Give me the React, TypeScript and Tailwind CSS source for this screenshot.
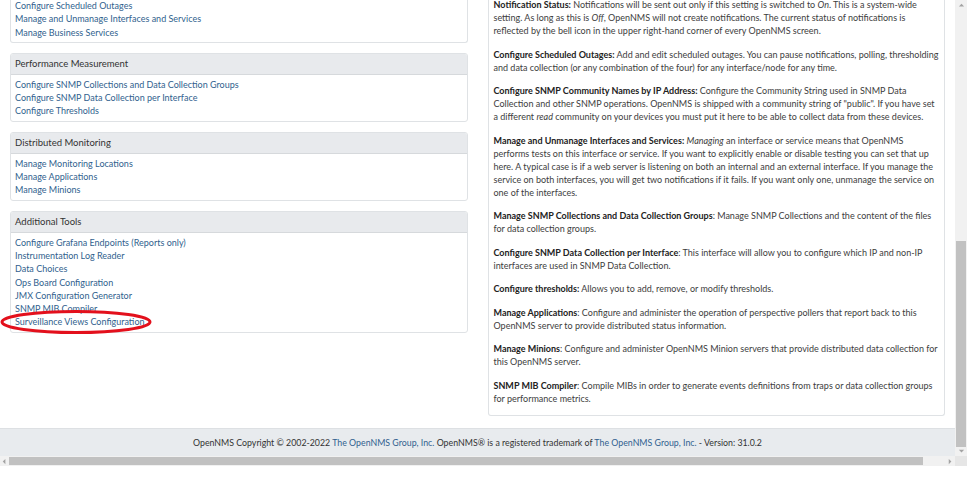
import React from 'react';

const font = { fontFamily: 'Lato, "Open Sans", sans-serif' };

const sections = [
  {
    title: '',
    links: ['Configure Scheduled Outages', 'Manage and Unmanage Interfaces and Services', 'Manage Business Services'],
  },
  {
    title: 'Performance Measurement',
    links: [
      'Configure SNMP Collections and Data Collection Groups',
      'Configure SNMP Data Collection per Interface',
      'Configure Thresholds',
    ],
  },
  {
    title: 'Distributed Monitoring',
    links: ['Manage Monitoring Locations', 'Manage Applications', 'Manage Minions'],
  },
  {
    title: 'Additional Tools',
    links: [
      'Configure Grafana Endpoints (Reports only)',
      'Instrumentation Log Reader',
      'Data Choices',
      'Ops Board Configuration',
      'JMX Configuration Generator',
      'SNMP MIB Compiler',
      'Surveillance Views Configuration',
    ],
  },
];

function Card({ title, links }: { title: string; links: string[] }) {
  return (
    <div className={`overflow-hidden rounded-[3px] border border-[#dfe2e5] bg-white ${title ? '' : 'mt-[-6px] border-t-0'}`}>
      {title && (
        <div className="h-[21px] border-b border-[#d6d9dc] bg-[#e8eaed] px-[4px] text-[9.5px] leading-[20px] text-[#333]">
          {title}
        </div>
      )}
      <ul className={`px-[4px] text-[9px] leading-[13.3px] text-[#315f8e] ${title ? 'pt-[3px] pb-[3px]' : 'pt-[5px] pb-[3px]'}`}>
        {links.map((l) => (
          <li key={l}>{l}</li>
        ))}
      </ul>
    </div>
  );
}

function Para({ label, children }: { label: string; children: React.ReactNode }) {
  return (
    <p className="mb-[10.5px] last:mb-0">
      <b className="font-bold text-[#222]">{label}</b>
      {children}
    </p>
  );
}

function Help() {
  return (
    <div className="mt-[-4px] rounded-[3px] border border-t-0 border-[#dfe2e5] bg-white px-[5px] pt-[2px] pb-[10px] text-[9px] leading-[13px] text-[#3d3d3d]">
      <Para label="Notification Status:">
        {' '}Notifications will be sent out only if this setting is switched to <i>On</i>. This is a system-wide setting. As
        long as this is <i>Off</i>, OpenNMS will not create notifications. The current status of notifications is
        reflected by the bell icon in the upper right-hand corner of every OpenNMS screen.
      </Para>
      <Para label="Configure Scheduled Outages:">
        {' '}Add and edit scheduled outages. You can pause notifications, polling, thresholding and data collection (or
        any combination of the four) for any interface/node for any time.
      </Para>
      <Para label="Configure SNMP Community Names by IP Address:">
        {' '}Configure the Community String used in SNMP Data Collection and other SNMP operations. OpenNMS is shipped
        with a community string of "public". If you have set a different <i>read</i> community on your devices you must
        put it here to be able to collect data from these devices.
      </Para>
      <Para label="Manage and Unmanage Interfaces and Services:">
        {' '}<i>Managing</i> an interface or service means that OpenNMS performs tests on this interface or service. If
        you want to explicitly enable or disable testing you can set that up here. A typical case is if a web server is
        listening on both an internal and an external interface. If you manage the service on both interfaces, you will
        get two notifications if it fails. If you want only one, unmanage the service on one of the interfaces.
      </Para>
      <Para label="Manage SNMP Collections and Data Collection Groups">
        : Manage SNMP Collections and the content of the files for data collection groups.
      </Para>
      <Para label="Configure SNMP Data Collection per Interface">
        : This interface will allow you to configure which IP and non-IP interfaces are used in SNMP Data Collection.
      </Para>
      <Para label="Configure thresholds:">{' '}Allows you to add, remove, or modify thresholds.</Para>
      <Para label="Manage Applications">
        : Configure and administer the operation of perspective pollers that report back to this OpenNMS server to
        provide distributed status information.
      </Para>
      <Para label="Manage Minions">
        : Configure and administer OpenNMS Minion servers that provide distributed data collection for this OpenNMS
        server.
      </Para>
      <Para label="SNMP MIB Compiler">
        : Compile MIBs in order to generate events definitions from traps or data collection groups for performance
        metrics.
      </Para>
    </div>
  );
}

function Arrow({ dir }: { dir: 'up' | 'down' | 'left' | 'right' }) {
  const pts = {
    up: '1,5 4,2 7,5',
    down: '1,2 4,5 7,2',
    left: '5,1 2,4 5,7',
    right: '2,1 5,4 2,7',
  }[dir];
  return (
    <svg width="7" height="7" viewBox="0 0 8 8">
      <polygon points={pts} fill="#a3a3a3" />
    </svg>
  );
}

export default function App() {
  return (
    <div className="relative h-[490px] w-[967px] overflow-hidden bg-white" style={font}>
      <div className="flex h-[466px]">
        <div className="flex w-[955px] flex-col">
          <div className="flex h-[428px] gap-[20px] overflow-hidden px-[10px]">
            <div className="flex w-[458px] flex-col gap-[10px]">
              {sections.map((s) => (
                <Card key={s.links[0]} title={s.title} links={s.links} />
              ))}
            </div>
            <div className="w-[458px]">
              <Help />
            </div>
          </div>
          <footer className="flex h-[28px] items-center justify-center border-t border-[#dde0e3] bg-[#e8ebee] text-[8.8px] text-[#333]">
            <span className="whitespace-nowrap">
              OpenNMS Copyright © 2002-2022 <span className="text-[#315f8e]">The OpenNMS Group, Inc.</span> OpenNMS® is a
              registered trademark of <span className="text-[#315f8e]">The OpenNMS Group, Inc.</span> - Version: 31.0.2
            </span>
          </footer>
          <div className="flex h-[10px] items-center bg-[#f1f1f1]">
            <div className="flex w-[9px] justify-center">
              <Arrow dir="left" />
            </div>
            <div className="h-[8px] w-[914px] bg-[#c1c1c1]" />
            <div className="flex-1" />
            <div className="flex w-[9px] justify-center">
              <Arrow dir="right" />
            </div>
          </div>
        </div>
        <div className="flex w-[12px] flex-col bg-[#f1f1f1]">
          <div className="flex h-[12px] items-center justify-center">
            <Arrow dir="up" />
          </div>
          <div className="flex flex-1 flex-col px-[1px]">
            <div className="h-[229px]" />
            <div className="h-[206px] bg-[#c1c1c1]" />
          </div>
          <div className="flex h-[10px] items-center justify-center">
            <Arrow dir="down" />
          </div>
          <div className="h-[10px] bg-[#e6e6e6]" />
        </div>
      </div>
      <svg className="pointer-events-none absolute left-0 top-0" width="967" height="490">
        <ellipse cx="76" cy="322" rx="74" ry="10.5" fill="none" stroke="#e3101c" strokeWidth="3" />
      </svg>
    </div>
  );
}
